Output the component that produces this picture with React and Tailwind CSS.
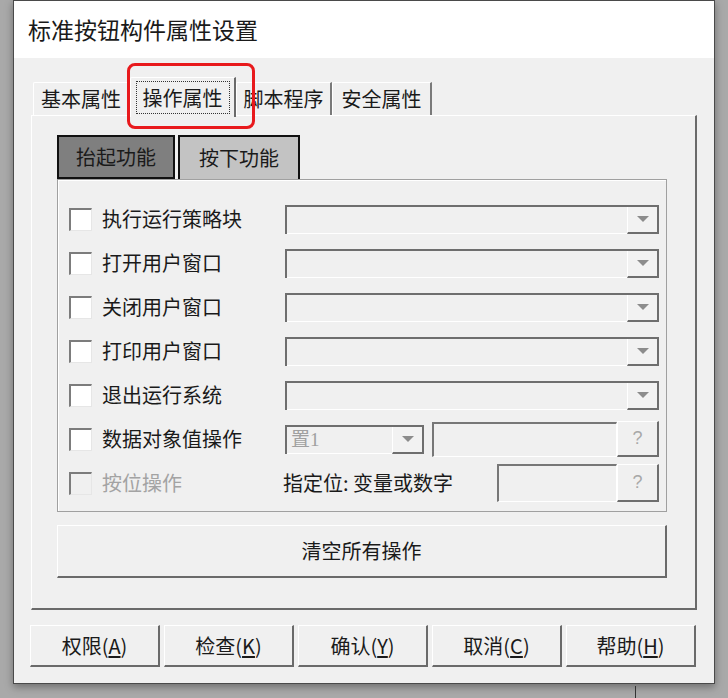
import React from "react";

const Arrow = () => (
  <svg width="12" height="7" viewBox="0 0 12 7">
    <polygon points="0,0 12,0 6,6" fill="#8c8c8c" />
  </svg>
);

const Checkbox = ({ disabled }) => (
  <div
    className={`w-[23px] h-[23px] shrink-0 border-t-2 border-l-2 border-[#7c7c7c] border-b border-r border-b-[#e6e6e6] border-r-[#e6e6e6] ${
      disabled ? "bg-[#f0f0f0]" : "bg-white"
    }`}
  />
);

const Combo = ({ className, text }) => (
  <div
    className={`flex h-[29px] border-t-2 border-l-2 border-[#6e6e6e] bg-[#f0f0f0] ${className}`}
  >
    <div className="flex-1 border-b border-white pl-[4px] text-[19px] leading-[26px] text-[#a0a0a0] font-['Liberation_Serif','Noto_Sans_CJK_SC',serif]">
      {text}
    </div>
    <div className="w-[32px] flex items-center justify-center bg-[#f2f2f2] border-l border-white border-r-2 border-b-2 border-r-[#6e6e6e] border-b-[#6e6e6e]">
      <Arrow />
    </div>
  </div>
);

const Field = ({ className }) => (
  <div
    className={`border-t-2 border-l-2 border-[#777] border-b border-r border-b-white border-r-white bg-[#f0f0f0] ${className}`}
  />
);

const Help = ({ className }) => (
  <div
    className={`w-[42px] flex items-center justify-center bg-[#f0f0f0] border-t border-l border-white border-r-2 border-b-2 border-r-[#6e6e6e] border-b-[#6e6e6e] text-[18px] text-[#a8a8a8] font-['Liberation_Sans',sans-serif] ${className}`}
  >
    ?
  </div>
);

const Row = ({ label, children, disabled }) => (
  <div className="flex items-center h-[44px]">
    <Checkbox disabled={disabled} />
    <div
      className={`ml-[10px] w-[183px] shrink-0 text-[20px] leading-none ${
        disabled ? "text-[#a3a3a3]" : "text-[#1a1a1a]"
      }`}
    >
      {label}
    </div>
    {children}
  </div>
);

const DlgButton = ({ label, k }) => (
  <button className="w-[130px] h-[42px] bg-[#f0f0f0] border-t border-l border-white border-r-2 border-b-2 border-r-[#6a6a6a] border-b-[#6a6a6a] text-[20px] text-[#1a1a1a] leading-none">
    {label}(<span className="underline underline-offset-2">{k}</span>)
  </button>
);

export default function App() {
  const tabs = [
    { name: "基本属性", w: "w-[97px]" },
    { name: "操作属性", w: "w-[106px]", active: true },
    { name: "脚本程序", w: "w-[96px]" },
    { name: "安全属性", w: "w-[100px]" },
  ];

  return (
    <div className="relative w-[728px] h-[698px] overflow-hidden bg-[#a9a9a9] font-['Noto_Sans_CJK_SC',sans-serif] text-[#1a1a1a]">
      <div className="ml-[13px] w-[702px] h-[684px] border border-[#4a4a4a] bg-[#f0f0f0] flex flex-col shadow-[0_3px_8px_rgba(0,0,0,0.35)]">
        <div className="h-[57px] bg-white flex items-center pl-[14px] text-[23px] leading-none">
          标准按钮构件属性设置
        </div>

        <div className="pl-[17px] pt-[19px]">
          <div className="flex items-end h-[38px] pl-[2px]">
            {tabs.map((t) =>
              t.active ? (
                <div
                  key={t.name}
                  className={`${t.w} h-[40px] -mb-[2px] relative z-10 bg-[#f0f0f0] border-t border-l border-white border-r-2 border-r-[#6a6a6a] rounded-tl-[2px] flex items-center justify-center`}
                >
                  <span className="border border-dotted border-[#333] px-[6px] h-[33px] flex items-center text-[20px] leading-none">
                    {t.name}
                  </span>
                </div>
              ) : (
                <div
                  key={t.name}
                  className={`${t.w} h-[33px] bg-[#f0f0f0] border-t border-l border-white border-r-2 border-r-[#7a7a7a] rounded-tl-[2px] flex items-center justify-center text-[20px] leading-none`}
                >
                  {t.name}
                </div>
              )
            )}
          </div>

          <div className="w-[666px] h-[495px] border-t border-l border-white border-r-2 border-b-2 border-r-[#6a6a6a] border-b-[#6a6a6a] pl-[25px] pt-[19px]">
            <div className="flex h-[44px]">
              <div className="w-[118px] bg-[#7f7f7f] border-2 border-[#111] flex items-center justify-center text-[20px] leading-none">
                抬起功能
              </div>
              <div className="ml-[3px] w-[122px] bg-[#c3c3c3] border-2 border-[#111] border-b-0 flex items-center justify-center text-[20px] leading-none">
                按下功能
              </div>
            </div>

            <div className="w-[610px] h-[333px] border border-[#a0a0a0] shadow-[inset_1px_1px_0_white] pl-[11px] pt-[17px]">
              <Row label="执行运行策略块">
                <Combo className="w-[374px]" />
              </Row>
              <Row label="打开用户窗口">
                <Combo className="w-[374px]" />
              </Row>
              <Row label="关闭用户窗口">
                <Combo className="w-[374px]" />
              </Row>
              <Row label="打印用户窗口">
                <Combo className="w-[374px]" />
              </Row>
              <Row label="退出运行系统">
                <Combo className="w-[374px]" />
              </Row>
              <Row label="数据对象值操作">
                <Combo className="w-[139px]" text="置1" />
                <Field className="ml-[8px] w-[185px] h-[35px]" />
                <Help className="h-[36px]" />
              </Row>
              <div className="flex items-center h-[44px]">
                <Checkbox disabled />
                <div className="ml-[10px] w-[181px] shrink-0 text-[20px] leading-none text-[#a3a3a3]">
                  按位操作
                </div>
                <div className="w-[214px] shrink-0 text-[20px] leading-none">
                  指定位: 变量或数字
                </div>
                <Field className="w-[120px] h-[38px]" />
                <Help className="h-[38px]" />
              </div>
            </div>

            <button className="mt-[13px] w-[610px] h-[53px] bg-[#f0f0f0] border-t border-l border-white border-r-2 border-b-2 border-r-[#6a6a6a] border-b-[#6a6a6a] text-[20px] leading-none">
              清空所有操作
            </button>
          </div>
        </div>

        <div className="flex gap-[4px] pl-[16px] mt-[15px]">
          <DlgButton label="权限" k="A" />
          <DlgButton label="检查" k="K" />
          <DlgButton label="确认" k="Y" />
          <DlgButton label="取消" k="C" />
          <DlgButton label="帮助" k="H" />
        </div>
      </div>

      <div className="absolute left-[127px] top-[63px] w-[128px] h-[66px] border-[3px] border-[#e8191c] rounded-[8px] pointer-events-none" />
      <div className="absolute left-[635px] top-[686px] w-px h-[12px] bg-[#333]" />
    </div>
  );
}
